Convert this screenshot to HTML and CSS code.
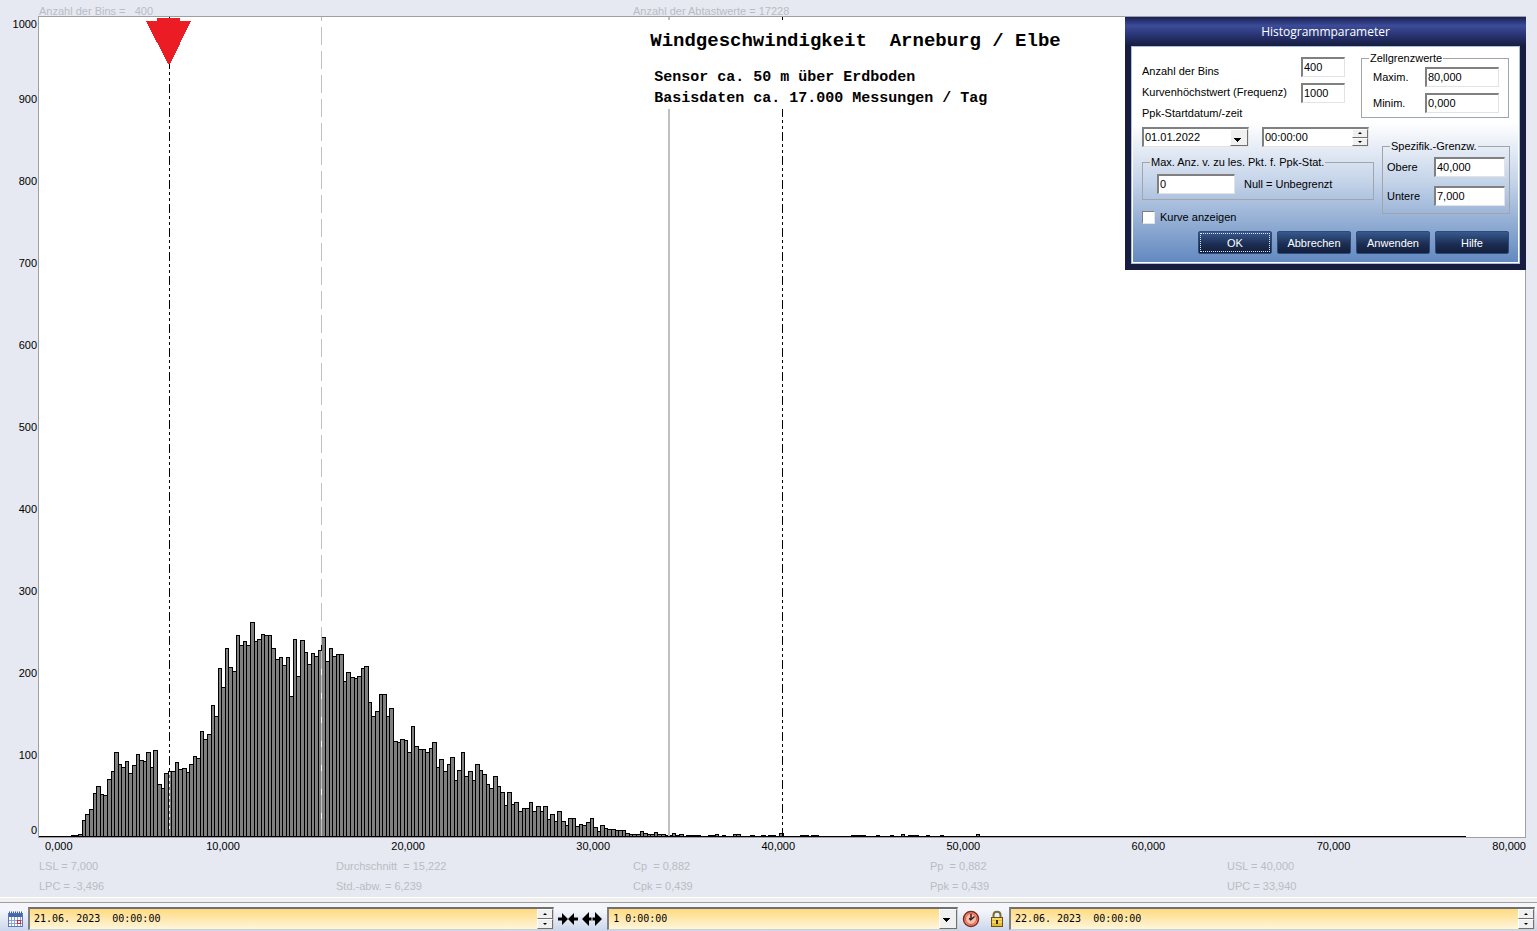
FILE: index.html
```html
<!DOCTYPE html>
<html lang="de">
<head>
    <meta charset="UTF-8">
    <meta name="viewport" content="width=device-width, initial-scale=1.0">
    <title>Histogramm</title>
    <link rel="stylesheet" href="styles.css">
</head>
<body>

    <main class="chart">
        <div class="stats header">
            <span>Anzahl der Bins =   400</span>
            <span></span>
            <span>Anzahl der Abtastwerte = 17228</span>
        </div>

        <div class="plot-row">
            <div class="y-axis">
                <span>1000</span>
                <span>900</span>
                <span>800</span>
                <span>700</span>
                <span>600</span>
                <span>500</span>
                <span>400</span>
                <span>300</span>
                <span>200</span>
                <span>100</span>
                <span>0</span>
            </div>
            <div class="plot">
                <svg viewBox="0 0 1486 820" preserveAspectRatio="none" shape-rendering="crispEdges">
                    <g id="bars"></g>
                    <path class="base" d="M0 819.5H1427"/>
                    <path class="mean-inner" d="M282.5 640V819"/>
                    <path class="mean" d="M282.5 0V819"/>
                    <path class="upc" d="M630 0V819"/>
                    <path class="limit" d="M130.5 0V755"/>
                    <path class="limit-inner" d="M130.5 755V812"/>
                    <path class="limit" d="M743.5 0V819"/>
                    <path class="marker" d="M118 1H141V4H152L131 47H129L107 4H118Z"/>
                </svg>
                <div class="caption">
                    <h1>Windgeschwindigkeit  Arneburg / Elbe</h1>
                    <p>Sensor ca. 50 m über Erdboden</p>
                    <p>Basisdaten ca. 17.000 Messungen / Tag</p>
                </div>
            </div>
        </div>

        <div class="x-axis">
            <span>0,000</span>
            <span>10,000</span>
            <span>20,000</span>
            <span>30,000</span>
            <span>40,000</span>
            <span>50,000</span>
            <span>60,000</span>
            <span>70,000</span>
            <span>80,000</span>
        </div>

        <div class="stats">
            <span>LSL = 7,000</span>
            <span>Durchschnitt  = 15,222</span>
            <span>Cp  = 0,882</span>
            <span>Pp  = 0,882</span>
            <span>USL = 40,000</span>
            <span>LPC = -3,496</span>
            <span>Std.-abw. = 6,239</span>
            <span>Cpk = 0,439</span>
            <span>Ppk = 0,439</span>
            <span>UPC = 33,940</span>
        </div>
    </main>

    <footer class="toolbar">
        <button class="icon" aria-label="Kalender">
            <svg width="16" height="16" viewBox="0 0 16 16">
                <rect x="0.5" y="2.5" width="14" height="13" fill="#fff" stroke="#5b78b8"/>
                <path d="M1 4.5H14" stroke="#4468b0" stroke-width="3"/>
                <path d="M1 1.5H15" stroke="#47598a" stroke-width="2" stroke-dasharray="1 1"/>
                <path d="M1 9.500H14M1 12.500H14M3.500 6V15M6.500 6V15M9.500 6V15M12.500 6V15" stroke="#8ba3d2"/>
                <rect x="9.500" y="9.500" width="3" height="3" fill="#fff" stroke="#d62c3c"/>
            </svg>
        </button>
        <div class="field">
            <input type="text" value="21.06. 2023  00:00:00" aria-label="Beginn">
            <div class="spin">
                <button aria-label="Mehr"></button>
                <button aria-label="Weniger"></button>
            </div>
        </div>
        <div class="icons">
            <button class="icon" aria-label="Zeitraum verkleinern">
                <svg width="20" height="14" viewBox="0 0 20 14">
                    <path d="M0 5.500H4V1L10 7L4 13V8.500H0ZM20 5.500H16V1L10 7L16 13V8.500H20Z"/>
                </svg>
            </button>
            <button class="icon" aria-label="Zeitraum vergrößern">
                <svg width="20" height="14" viewBox="0 0 20 14">
                    <path d="M0 7L7 0V5.500H13V0L20 7L13 14V8.500H7V14Z"/>
                    <path d="M10 5V9" stroke="#e6edf9"/>
                </svg>
            </button>
        </div>
        <div class="field">
            <select aria-label="Zeitspanne">
                <option>1 0:00:00</option>
            </select>
        </div>
        <div class="icons">
            <button class="icon" aria-label="Aktuelle Zeit">
                <svg width="18" height="18" viewBox="0 0 18 18">
                    <circle cx="9" cy="9" r="7.500" fill="#f9a28a" stroke="#7b2a20" stroke-width="1.500"/>
                    <circle cx="9" cy="9" r="5.500" fill="#fbc0a4" stroke="#e0503c"/>
                    <path d="M9 4V9.500L12.500 6.500M9 9.500L7 8.500" fill="none" stroke="#352030" stroke-width="1.500"/>
                </svg>
            </button>
            <button class="icon" aria-label="Sperren">
                <svg width="14" height="18" viewBox="0 0 14 18">
                    <path d="M3.500 9V5C3.500 0.500 10.500 0.500 10.500 5V9" fill="none" stroke="#77703c" stroke-width="2"/>
                    <rect x="1.500" y="7.500" width="11" height="9" fill="#e8bc30" stroke="#6d5210"/>
                    <path d="M2 9H12M2 12H12" stroke="#fff0a0"/>
                    <path d="M7 10V14" stroke="#3d2c08" stroke-width="2"/>
                </svg>
            </button>
        </div>
        <div class="field">
            <input type="text" value="22.06. 2023  00:00:00" aria-label="Ende">
            <div class="spin">
                <button aria-label="Mehr"></button>
                <button aria-label="Weniger"></button>
            </div>
        </div>
    </footer>

    <section class="dialog">
        <h2>Histogrammparameter</h2>
        <form class="panel">
            <div class="top">
                <div class="labels">
                    <label for="bins">Anzahl der Bins</label>
                    <label for="peak">Kurvenhöchstwert (Frequenz)</label>
                    <label for="startDate">Ppk-Startdatum/-zeit</label>
                </div>
                <div class="values">
                    <input type="text" id="bins" value="400">
                    <input type="text" id="peak" value="1000">
                </div>
                <fieldset class="cells">
                    <legend>Zellgrenzwerte</legend>
                    <label for="maxim">Maxim.</label>
                    <input type="text" id="maxim" value="80,000">
                    <label for="minim">Minim.</label>
                    <input type="text" id="minim" value="0,000">
                </fieldset>
            </div>
            <div class="middle">
                <div class="left">
                    <div class="start">
                        <select id="startDate">
                            <option>01.01.2022</option>
                        </select>
                        <div class="time">
                            <input type="text" value="00:00:00" aria-label="Startzeit">
                            <div class="spin">
                                <button type="button" aria-label="Mehr"></button>
                                <button type="button" aria-label="Weniger"></button>
                            </div>
                        </div>
                    </div>
                    <fieldset class="points">
                        <legend>Max. Anz. v. zu les. Pkt. f. Ppk-Stat.</legend>
                        <input type="text" id="points" value="0">
                        <label for="points">Null = Unbegrenzt</label>
                    </fieldset>
                    <label class="check"><input type="checkbox"> Kurve anzeigen</label>
                </div>
                <fieldset class="limits">
                    <legend>Spezifik.-Grenzw.</legend>
                    <label for="upper">Obere</label>
                    <input type="text" id="upper" value="40,000">
                    <label for="lower">Untere</label>
                    <input type="text" id="lower" value="7,000">
                </fieldset>
            </div>
            <div class="buttons">
                <button type="button" class="default">OK</button>
                <button type="button">Abbrechen</button>
                <button type="button">Anwenden</button>
                <button type="button">Hilfe</button>
            </div>
        </form>
    </section>

    <script src="script.js"></script>
</body>
</html>
```
FILE: styles.css
```css
* {
    box-sizing: border-box;
}

body {
    margin: 0;
    min-height: 100vh;
    display: flex;
    flex-direction: column;
    position: relative;
    background: #e6e9f1;
    font-family: "Liberation Sans", Arial, sans-serif;
    font-size: 11px;
    color: #000;
}

input, select, button {
    font: inherit;
    color: inherit;
    margin: 0;
    border-radius: 0;
    min-width: 0;
}

/* Chart */
.chart {
    flex: 1;
    display: flex;
    flex-direction: column;
    padding: 0 11px 1px 0;
    border-bottom: 1px solid #fff;
}

.stats {
    display: grid;
    grid-template-columns: repeat(5, 1fr);
    padding: 0 2px 0 39px;
    line-height: 20px;
    color: #b9bcc3;
    white-space: pre;
}

.header {
    height: 16px;
    line-height: 22px;
}

.plot-row {
    flex: 1;
    display: flex;
}

.y-axis {
    width: 38px;
    padding: 1px 1px 1px 0;
    display: grid;
    grid-template-rows: 1fr repeat(9, 2fr) 1fr;
    align-items: center;
    text-align: right;
    line-height: 14px;
}

.y-axis span:first-child {
    align-self: start;
}

.y-axis span:last-child {
    align-self: end;
}

.plot {
    flex: 1;
    position: relative;
    background: #fff;
    border: 1px solid #a0a0a0;
}

.plot > svg {
    position: absolute;
    width: 100%;
    height: 100%;
}

#bars rect {
    fill: #808080;
    stroke: #000;
}

.base {
    stroke: #000;
}

.mean {
    stroke: #c0c0c0;
    stroke-dasharray: 18 6;
    stroke-dashoffset: 14;
}

.mean-inner {
    stroke: #fff;
}

.upc {
    stroke: #c0c0c0;
    stroke-width: 2;
}

.limit {
    stroke: #000;
    stroke-dasharray: 9 3 3 3 3 3;
    stroke-dashoffset: 5;
}

.limit-inner {
    stroke: #fff;
    stroke-dasharray: 3 3;
}

.marker {
    fill: #ec1c24;
}

.caption {
    position: absolute;
    top: 3px;
    left: 41%;
    padding: 0 10px 0 6px;
    background: #fff;
    font-family: "Liberation Mono", "Courier New", monospace;
    font-size: 15px;
    font-weight: bold;
    line-height: 21px;
}

.caption h1,
.caption p {
    margin: 0;
    white-space: pre;
}

.caption h1 {
    margin: 0 0 5px -4px;
    font-size: 19px;
    line-height: 42px;
}

.x-axis {
    display: grid;
    grid-template-columns: 1fr repeat(7, 2fr) 100px;
    padding: 0 0 2px 38px;
    line-height: 16px;
    text-align: center;
}

.x-axis span:first-child {
    padding-left: 7px;
    text-align: left;
}

.x-axis span:last-child {
    text-align: right;
}

/* Toolbar */
.toolbar {
    display: grid;
    grid-template-columns: 28px 3fr 53px 2fr 51px 3fr;
    height: 33px;
    padding: 5px 2px 1px 0;
    border-top: 4px solid #f0f0f0;
    background: linear-gradient(#a0a0a0 1px, #f4f6fb 1px, #f4f6fb 8px, #cbd6ec);
    font-family: "DejaVu Sans Mono", monospace;
    font-size: 10px;
}

.toolbar > .icon {
    padding-left: 3px;
}

.icons {
    display: flex;
    justify-content: space-between;
    padding: 0 5px 0 4px;
}

.icon {
    display: flex;
    align-items: center;
    justify-content: center;
    padding: 0;
    border: 0;
    background: none;
}

.field {
    display: flex;
    border: 1px solid #d0d0d0;
    border-top: 2px solid #707070;
    border-left: 2px solid #808080;
    background: linear-gradient(#ffda80, #fff6dc);
}

.field input,
.field select {
    flex: 1;
    padding: 0 4px 2px;
    border: 0;
    background: none;
    white-space: pre;
}

.spin {
    width: 16px;
    display: flex;
    flex-direction: column;
}

.spin button {
    flex: 1;
    padding: 0;
    border: 1px solid;
    border-color: #fff #707070 #707070 #fff;
    background: #f0f0f0;
    display: flex;
    align-items: center;
    justify-content: center;
}

.spin button::before {
    content: "";
    border: 2px solid transparent;
    border-top: 0;
    border-bottom-color: #000;
}

.spin button:last-child::before {
    border-top: 2px solid #000;
    border-bottom: 0;
}

select {
    appearance: none;
}

.field:has(select),
.start {
    position: relative;
}

/* drop-down arrow */
.field:has(select)::after,
.start::after {
    content: "";
    position: absolute;
    top: 0;
    right: 0;
    bottom: 0;
    width: 16px;
    border: 1px solid;
    border-color: #fff #707070 #707070 #fff;
    background: linear-gradient(#000, #000) 3px 8px / 7px 1px no-repeat,
        linear-gradient(#000, #000) 4px 9px / 5px 1px no-repeat,
        linear-gradient(#000, #000) 5px 10px / 3px 1px no-repeat,
        linear-gradient(#000, #000) 6px 11px / 1px 1px no-repeat, #f0f0f0;
    pointer-events: none;
}

/* Parameter dialog */
.dialog {
    position: absolute;
    top: 17px;
    right: 11px;
    width: 401px;
    padding: 0 6px 6px;
    background: #171c40;
}

.dialog h2 {
    margin: 0 -6px;
    font-family: "Open Sans", sans-serif;
    font-size: 12px;
    font-weight: normal;
    line-height: 29px;
    text-align: center;
    color: #fff;
    background: linear-gradient(#1a2054, #3c4c98 30%, #2a3676 60%, #171c40);
}

.panel {
    padding: 0 8px 9px 10px;
    border: 1px solid #a9c0e0;
    outline: 1px solid #fff;
    outline-offset: -2px;
    background: linear-gradient(#fff 35%, #c5d4e9 62%, #6188bf);
}

.top, .middle {
    display: flex;
}

.top {
    height: 80px;
}

.labels {
    width: 159px;
    padding-top: 14px;
    line-height: 21px;
}

.labels label {
    display: block;
}

.values {
    width: 44px;
    margin-right: 16px;
    padding-top: 10px;
    display: flex;
    flex-direction: column;
    gap: 6px;
}

.panel input[type="text"],
.panel select {
    width: 100%;
    height: 20px;
    padding: 0 1px 1px;
    border: 1px solid #e3e3e3;
    border-top: 2px solid #808080;
    border-left: 2px solid #808080;
    background: #fff;
}

fieldset {
    margin: 0;
    min-width: 0;
    border: 1px solid #a0a4ac;
    display: grid;
    align-items: center;
}

legend {
    margin-left: 6px;
    padding: 0 1px;
    line-height: 12px;
}

.cells {
    width: 148px;
    height: 66px;
    margin-top: 5px;
    padding: 3px 9px 5px 11px;
    grid-template-columns: 52px 1fr;
    row-gap: 6px;
}

.cells legend {
    margin-left: -4px;
}

.left {
    width: 232px;
    margin-right: 8px;
}

.start {
    display: flex;
    width: 107px;
    gap: 13px;
}

.start::after {
    top: 2px;
    right: 1px;
    bottom: 1px;
}

.start select {
    flex: none;
}

.time {
    flex: none;
    width: 107px;
    display: flex;
    position: relative;
}

.time .spin {
    position: absolute;
    top: 2px;
    right: 1px;
    bottom: 1px;
}

.points {
    margin-top: 9px;
    padding: 6px 12px 5px 14px;
    grid-template-columns: 78px 1fr;
    column-gap: 9px;
}

.points legend {
    margin-left: -7px;
}

.check {
    display: flex;
    align-items: center;
    gap: 5px;
    width: 120px;
    height: 14px;
    margin-top: 10px;
}

.check input {
    appearance: none;
    width: 13px;
    height: 13px;
    border: 1px solid #e3e3e3;
    border-top-color: #808080;
    border-left-color: #808080;
    background: #fff;
}

.limits {
    width: 128px;
    height: 74px;
    margin-top: 13px;
    padding: 5px 4px 8px 4px;
    grid-template-columns: 47px 1fr;
    row-gap: 9px;
}

.limits legend {
    margin-left: 3px;
}

.buttons {
    display: flex;
    justify-content: flex-end;
    gap: 5px;
    margin-top: 7px;
    padding-right: 2px;
}

.buttons button {
    width: 74px;
    height: 23px;
    padding: 0;
    border: 1px solid #2d4a78;
    border-radius: 2px;
    color: #fff;
    background: linear-gradient(#37598f, #1b2c50 60%, #131f3c);
}

.buttons .default {
    outline: 1px dotted #dfe6f2;
    outline-offset: -3px;
}
```
FILE: script.js
```js
// bar heights on the 820 unit high plot, one per bin
const heights = [
    0, 0, 0, 0, 0, 0, 0, 0, 0, 1, 1, 2,
    16, 22, 27, 43, 50, 42, 41, 57, 65, 84, 72, 69, 75, 63, 71, 82,
    76, 75, 84, 69, 86, 52, 48, 63, 65, 65, 74, 67, 68, 64, 72, 80,
    78, 105, 97, 102,
    131, 120, 168, 149, 188, 169, 165, 201, 191, 195, 191, 214,
    195, 197, 202, 201, 201, 188, 177, 179, 171, 179, 140, 197,
    160, 196, 184, 172, 183, 180, 186, 199, 175, 188, 180, 182, 182,
    155, 164, 159, 158, 160, 168, 170, 134, 120, 125, 142, 142,
    120, 128, 95, 94, 97, 96, 84, 110, 90, 87, 87, 84, 88, 94, 69,
    77, 65, 72, 79, 56, 66, 84, 60, 65,
    56, 72, 66, 62, 52, 48, 60, 50, 44, 31, 44, 32, 34, 25, 28, 28,
    34, 25, 30, 25, 30, 17, 22, 15, 25, 15, 11, 18, 18, 10, 12, 11,
    14, 18, 9, 5, 11, 8, 7, 7, 6, 6, 6, 3, 2, 2, 2, 5, 3, 2, 2, 4, 2,
    2, 1, 1, 3, 1, 2
];

// the few bins that are filled further to the right
const tail = {
    181: 1, 182: 1, 183: 1, 184: 1, 187: 1, 188: 1, 189: 2, 191: 1,
    194: 2, 195: 2, 199: 1, 202: 1, 204: 1, 205: 1, 207: 3, 213: 1,
    214: 1, 216: 1, 217: 1, 227: 1, 228: 1, 229: 1, 230: 1, 234: 1,
    238: 1, 241: 2, 243: 1, 244: 1, 245: 1, 248: 1, 252: 1, 262: 2
};

for (let i in tail) {
    heights[i] = tail[i];
}

const pitch = 3.575;
const bars = document.getElementById("bars");

heights.forEach((height, i) => {
    if (!height) return;
    let x = Math.round(i * pitch);
    let rect = document.createElementNS("http://www.w3.org/2000/svg", "rect");
    rect.setAttribute("x", x + 0.5);
    rect.setAttribute("y", 819.5 - height);
    rect.setAttribute("width", Math.round((i + 1) * pitch) - x);
    rect.setAttribute("height", height);
    bars.appendChild(rect);
});
```
